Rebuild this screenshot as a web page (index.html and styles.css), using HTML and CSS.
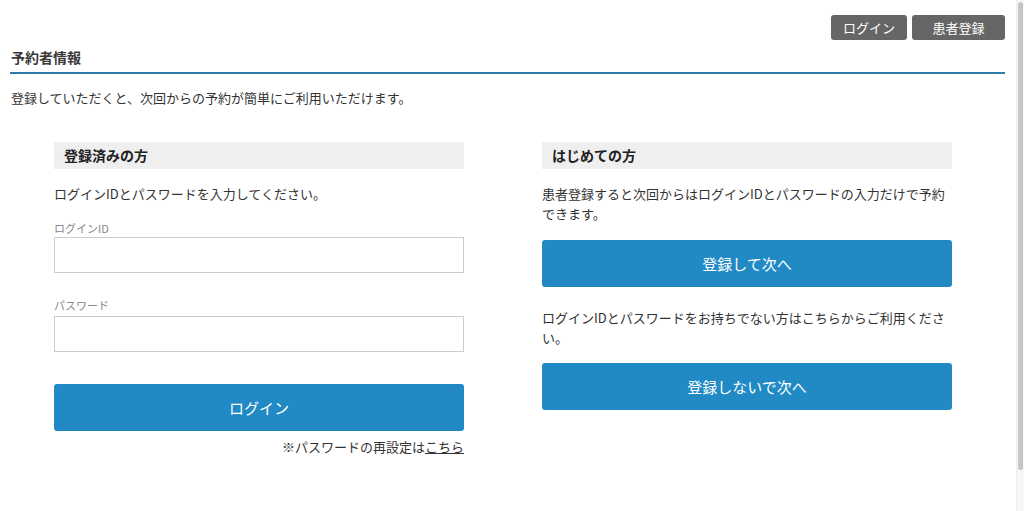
FILE: index.html
```html
<!DOCTYPE html>
<html lang="ja">
<head>
<meta charset="utf-8">
<title>予約者情報</title>
<link rel="stylesheet" href="styles.css">
</head>
<body>
<div class="page">
  <nav class="topnav">
    <a class="navbtn nav-login" href="#">ログイン</a>
    <a class="navbtn nav-reg" href="#">患者登録</a>
  </nav>
  <h1 class="title">予約者情報</h1>
  <p class="intro">登録していただくと、次回からの予約が簡単にご利用いただけます。</p>
  <div class="cols">
    <section class="col">
      <h2 class="sechead">登録済みの方</h2>
      <p class="desc">ログインIDとパスワードを入力してください。</p>
      <label class="label label-first">ログインID</label>
      <input class="field" type="text">
      <label class="label label-second">パスワード</label>
      <input class="field field-second" type="password">
      <button class="btn btn-login">ログイン</button>
      <p class="reset">※パスワードの再設定は<a href="#">こちら</a></p>
    </section>
    <section class="col">
      <h2 class="sechead">はじめての方</h2>
      <p class="desc">患者登録すると次回からはログインIDとパスワードの入力だけで予約できます。</p>
      <button class="btn btn-reg">登録して次へ</button>
      <p class="desc desc-second">ログインIDとパスワードをお持ちでない方はこちらからご利用ください。</p>
      <button class="btn btn-guest">登録しないで次へ</button>
    </section>
  </div>
</div>
<div class="scrollbar"><div class="thumb"></div></div>
</body>
</html>
```
FILE: styles.css
```css
* { box-sizing: border-box; }
html, body { margin: 0; padding: 0; }
body {
  display: flex;
  width: 1024px;
  height: 511px;
  overflow: hidden;
  background: #fff;
  color: #333;
  font-family: "Noto Sans CJK JP", "Noto Sans", sans-serif;
  font-size: 13px;
}
.page {
  flex: 1;
  padding: 0 11px 0 10px;
}
.topnav {
  display: flex;
  justify-content: flex-end;
  gap: 5px;
  padding-top: 15px;
}
.navbtn {
  display: block;
  height: 25px;
  line-height: 25px;
  background: #666;
  color: #fff;
  text-decoration: none;
  text-align: center;
  border-radius: 3px;
  font-size: 13px;
}
.nav-login { width: 76px; }
.nav-reg { width: 93px; }
.title {
  margin: 7px 0 0;
  padding: 0 0 5px 1px;
  font-size: 14px;
  line-height: 20px;
  font-weight: bold;
  color: #3a3a3a;
  border-bottom: 2px solid #2d7ba3;
}
.intro {
  margin: 14px 0 0 1px;
  line-height: 20px;
}
.cols {
  display: flex;
  gap: 78px;
  padding-left: 44px;
  margin-top: 34px;
}
.col {
  width: 410px;
  display: flex;
  flex-direction: column;
}
.sechead {
  margin: 0;
  height: 27px;
  line-height: 27px;
  padding-left: 10px;
  background: #efefef;
  font-size: 14px;
  font-weight: bold;
  color: #222;
}
.desc {
  margin: 15px 0 0;
  line-height: 20px;
}
.desc-second { margin-top: 21px; }
.label {
  display: block;
  font-size: 11px;
  line-height: 16px;
  color: #888;
  margin-top: 16px;
}
.label-second { margin-top: 24px; }
.field {
  display: block;
  width: 100%;
  height: 36px;
  margin-top: 1px;
  border: 1px solid #ccc;
  background: #fff;
  font: inherit;
}
.field-second { margin-top: 3px; }
.btn {
  display: block;
  width: 100%;
  height: 47px;
  border: none;
  border-radius: 3px;
  background: #218ac5;
  color: #fff;
  font-family: inherit;
  font-size: 15px;
  cursor: pointer;
}
.btn-login { margin-top: 32px; }
.btn-reg { margin-top: 16px; }
.btn-guest { margin-top: 15px; }
.reset {
  margin: 6px 0 0;
  line-height: 20px;
  text-align: right;
}
.reset a { color: #333; text-decoration: underline; }
.scrollbar {
  width: 8px;
  background: #f7f7f7;
  border-left: 1px solid #eee;
  padding: 2px 1px 0 1px;
}
.thumb {
  height: 468px;
  background: #c6c6c6;
  border-radius: 3px;
}
```
